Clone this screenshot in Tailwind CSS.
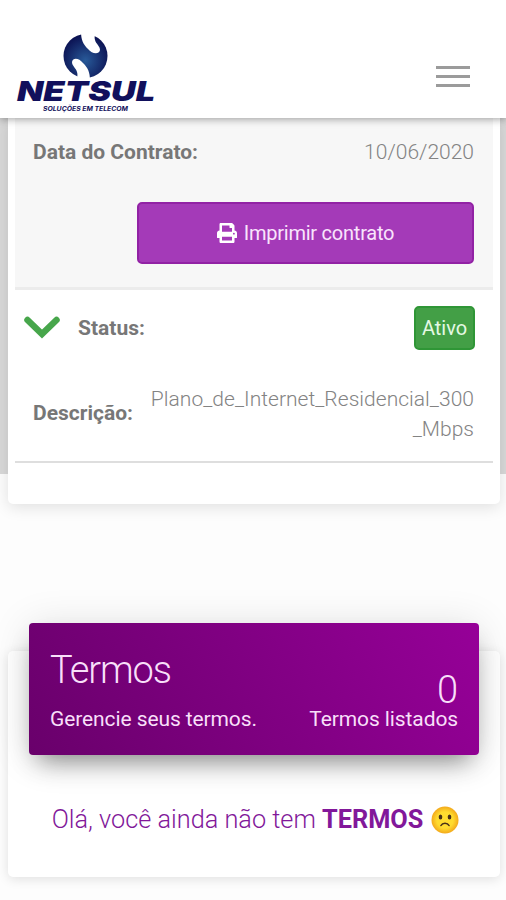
<!DOCTYPE html>
<html lang="pt-BR">
<head>
<meta charset="utf-8">
<meta name="viewport" content="width=device-width, initial-scale=1">
<title>Netsul</title>
<script src="https://cdn.jsdelivr.net/npm/@tailwindcss/browser@4"></script>
</head>
<body class="h-[900px] overflow-hidden bg-[linear-gradient(#d9d9d9_474px,#fdfdfd_474px)] font-[Roboto,sans-serif] font-light text-[#777]">
<header class="relative z-10 flex h-[118px] items-start justify-between bg-white pl-[15px] pr-9 pt-[31px] shadow-[0_1px_8px_rgba(0,0,0,0.38)]">
  <svg class="h-[82px] w-[142px]" viewBox="0 0 142 82" role="img" aria-label="Netsul">
    <defs>
      <radialGradient id="ball" cx="50%" cy="60%" r="58%"><stop offset="0" stop-color="#285a99"/><stop offset="1" stop-color="#0b1152"/></radialGradient>
    </defs>
    <circle cx="70.500" cy="25" r="22" fill="url(#ball)"/>
    <path d="M66 0C66 9 68 13 73 18C77 23 84 24 85 19C85 15 81 13 80 9C79 6 80 4 81 1Z" fill="#fff"/>
    <path d="M75 50C75 41 73 37 68 32C64 27 58 26 57 31C57 35 61 37 62 41C63 44 62 46 62 49Z" fill="#fff"/>
    <g fill="#11105c" font-family="Inter, sans-serif" font-style="italic" font-weight="900">
      <text x="2" y="70" font-size="27.500" textLength="138" lengthAdjust="spacingAndGlyphs">NETSUL</text>
      <text x="28" y="80" font-size="6" font-weight="700" textLength="85" lengthAdjust="spacingAndGlyphs">SOLUÇÕES EM TELECOM</text>
    </g>
  </svg>
  <button class="mt-[35px] flex w-[34px] flex-col gap-[6px]" aria-label="Menu">
    <span class="h-[3px] w-full bg-[#9b9b9b]"></span>
    <span class="h-[3px] w-full bg-[#9b9b9b]"></span>
    <span class="h-[3px] w-full bg-[#9b9b9b]"></span>
  </button>
</header>
<main class="px-2 pr-[6px]">
  <section class="h-[386px] rounded-b-[5px] bg-white px-[7px] shadow-[0_3px_16px_rgba(0,0,0,0.12)]">
    <div class="h-[172px] border-b-[3px] border-[#ececec] bg-[#f7f7f7] pl-[18px] pr-[19px] pt-[20px] text-[21px]">
      <div class="flex h-[30px] items-center justify-between">
        <b class="font-bold">Data do Contrato:</b>
        <span class="text-[#838383]">10/06/2020</span>
      </div>
      <button class="ml-auto mt-[34px] flex h-[62px] w-[337px] items-center justify-center gap-[7px] rounded-[5px] border-2 border-[#9222a5] bg-[#a43ab8] text-[20px] font-normal tracking-[-0.23px] text-[#f9e4fc]">
        <svg class="size-[20px]" viewBox="0 0 512 512" fill="#fff"><path d="M448 192V77c0-9-3-17-9-23L394 9c-6-6-14-9-23-9H96C78 0 64 14 64 32v160c-35 0-64 29-64 64v112c0 9 7 16 16 16h48v96c0 18 14 32 32 32h320c18 0 32-14 32-32v-96h48c9 0 16-7 16-16V256c0-35-29-64-64-64zm-64 256H128v-96h256v96zm0-224H128V64h192v48c0 9 7 16 16 16h48v96zm48 72a24 24 0 1 1 0-48 24 24 0 0 1 0 48z"/></svg>
        <span>Imprimir contrato</span>
      </button>
    </div>
    <div class="flex h-[173px] flex-col border-b-2 border-[#dedede] pl-[9px] pr-[18px] pt-4 text-[21px]">
      <div class="flex h-[44px] items-center">
        <svg class="-mt-px h-[23px] w-[36px]" viewBox="0 0 36 23" fill="none" stroke="#47a64b" stroke-width="6.500" stroke-linecap="round"><path d="M3.500 4L18 18L32.500 4"/></svg>
        <b class="ml-[18px] mt-px font-bold">Status:</b>
        <span class="ml-auto flex h-[44px] w-[61px] items-center justify-center rounded-[5px] border-2 border-[#2f9636] bg-[#439f46] text-[20px] font-normal text-[#e4f9e4]">Ativo</span>
      </div>
      <div class="mt-[34px] flex items-center justify-between pl-[9px] pr-px">
        <b class="font-bold">Descrição:</b>
        <p class="text-right leading-[30px] tracking-[0.03px] text-[#838383]">Plano_de_Internet_Residencial_300<br>_Mbps</p>
      </div>
    </div>
  </section>
  <section class="mt-[147px] h-[226px] rounded-[5px] bg-white px-[21px] shadow-[0_2px_12px_rgba(0,0,0,0.12)]">
    <div class="relative -top-7 flex h-[132px] justify-between rounded-[4px] bg-[linear-gradient(60deg,#69006b,#960098)] px-[21px] text-[21px] text-[#f8dff9] shadow-[0_14px_24px_-9px_rgba(0,0,0,0.45),0_3px_40px_rgba(0,0,0,0.12)]">
      <div class="pt-[25px]">
        <h2 class="text-[38px] leading-[44px] tracking-[-1.1px]">Termos</h2>
        <p class="mt-[12px] leading-[30px] font-normal tracking-[-0.1px]">Gerencie seus termos.</p>
      </div>
      <div class="pt-[45px] text-right">
        <p class="text-[38px] leading-[44px]">0</p>
        <p class="mt-[-8px] leading-[30px] font-normal tracking-[-0.1px]">Termos listados</p>
      </div>
    </div>
    <p class="mt-[21px] flex items-center justify-center whitespace-pre pl-[3px] text-[25.300px] leading-[32px] text-[#82189a]">Olá, você ainda não tem <b class="font-bold">TERMOS</b>
      <svg class="ml-2 size-7" viewBox="0 0 28 28" role="img" aria-label="🙁"><defs><radialGradient id="face"><stop offset=".6" stop-color="#ffdb2f"/><stop offset="1" stop-color="#f3a91b"/></radialGradient></defs><circle cx="14" cy="14" r="13.500" fill="url(#face)"/><ellipse cx="9.500" cy="11" rx="1.800" ry="2.500" fill="#493018"/><ellipse cx="18.500" cy="11" rx="1.800" ry="2.500" fill="#493018"/><path d="M10 19.500C11.500 16.500 16.500 16.500 18 19.500" fill="none" stroke="#493018" stroke-width="1.600" stroke-linecap="round"/></svg></p>
  </section>
</main>
</body>
</html>
